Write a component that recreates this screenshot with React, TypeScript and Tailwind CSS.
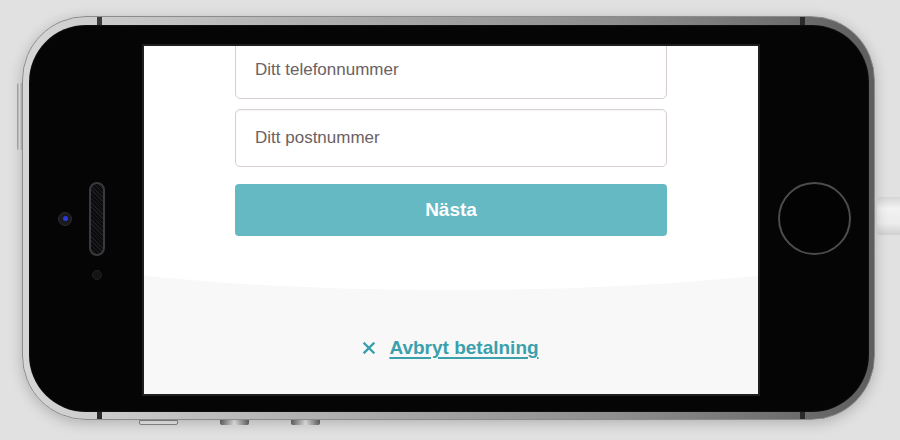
import React from 'react';

const font = {fontFamily: '"Liberation Sans", Arial, sans-serif'};

function CloseMark() {
    return (
        <svg width="12" height="12" viewBox="0 0 12 12" className="shrink-0">
            <path d="M1.5 1.5 L10.5 10.5 M10.5 1.5 L1.5 10.5" stroke="#3aa1ac" strokeWidth="2.4" strokeLinecap="square"/>
        </svg>
    );
}

function LeftBezel() {
    return (
        <div className="w-[113px] h-full flex items-center pl-[29px]">
            {/* front camera */}
            <div className="w-[14px] h-[14px] rounded-full bg-[#1b1b1f] border border-[#2c2c30] flex items-center justify-center">
                <div className="w-[5px] h-[5px] rounded-full bg-[#2a3bd8]"/>
            </div>
            {/* speaker + sensor */}
            <div className="ml-[17px] flex flex-col items-center">
                <div className="h-[24px]"/>
                <div className="w-[16px] h-[74px] rounded-full bg-[#121214] border-2 border-[#3a3a3e] bg-[repeating-linear-gradient(45deg,#1c1c1f_0px,#1c1c1f_1px,#0c0c0e_1px,#0c0c0e_3px)]"/>
                <div className="mt-[14px] w-[10px] h-[10px] rounded-full bg-[#141416] border border-[#222226]"/>
            </div>
        </div>
    );
}

function RightBezel() {
    return (
        <div className="flex-1 h-full flex items-center justify-center">
            <div className="w-[73px] h-[73px] rounded-full border-2 border-[#4c4c50] bg-[#030303]"/>
        </div>
    );
}

function Screen() {
    return (
        <div className="mt-[19px] w-[618px] h-[352px] border-2 border-[#1e1e1e] bg-[#1e1e1e]">
            <div className="w-[614px] h-[348px] overflow-hidden bg-[#f8f8f9] flex flex-col" style={font}>
                <div className="-mx-[120px] px-[120px] h-[244px] shrink-0 bg-white rounded-b-[50%_48px]">
                    <div className="w-[432px] mx-auto -mt-[5px] flex flex-col">
                        <input
                            placeholder="Ditt telefonnummer"
                            className="h-[58px] rounded-[5px] border border-[#d8d0d0] bg-white pl-[19px] text-[17px] text-[#6b6163] placeholder:text-[#6b6163] outline-none shadow-[inset_0_1px_2px_rgba(0,0,0,0.04)]"
                        />
                        <input
                            placeholder="Ditt postnummer"
                            className="mt-[10px] h-[58px] rounded-[5px] border border-[#d8d0d0] bg-white pl-[19px] text-[17px] text-[#6b6163] placeholder:text-[#6b6163] outline-none shadow-[inset_0_1px_2px_rgba(0,0,0,0.04)]"
                        />
                        <button className="mt-[17px] h-[52px] rounded-[4px] bg-[#65b9c3] text-white font-bold text-[19px]">
                            Nästa
                        </button>
                    </div>
                </div>
                <div className="flex items-center justify-center pt-[47px] gap-[14px]">
                    <CloseMark/>
                    <a className="text-[19px] leading-[22px] font-bold text-[#3aa1ac] underline decoration-2 underline-offset-[3px]">
                        Avbryt betalning
                    </a>
                </div>
            </div>
        </div>
    );
}

export default function App() {
    return (
        <div className="w-[900px] h-[440px] overflow-hidden bg-[#e1e1e1] flex items-start pt-[16px] pl-[17px]">
            {/* sleep button */}
            <div className="mt-[67px] w-[5px] h-[67px] rounded-l-[2px] bg-[linear-gradient(90deg,#9a9a9a,#e8e8e8,#b5b5b5)]"/>
            <div className="flex flex-col">
                <div className="relative w-[853px] h-[404px] rounded-[64px] pl-[6px] pt-[8px] pr-[5px] pb-[7px] border border-[#8c8c8c] bg-[linear-gradient(90deg,#d6d6d6,#b4b4b4_30%,#8e8e8e_70%,#5e5e5e)] shadow-[0_3px_14px_rgba(0,0,0,0.22)]">
                    <div className="absolute top-0 left-[74px] w-[5px] h-[8px] bg-[#3a3a3a]"/>
                    <div className="absolute bottom-0 left-[74px] w-[5px] h-[7px] bg-[#2a2a2a]"/>
                    <div className="absolute top-0 left-[777px] w-[5px] h-[8px] bg-[#2a2a2a]"/>
                    <div className="absolute bottom-0 left-[777px] w-[5px] h-[7px] bg-[#2a2a2a]"/>
                    <div className="w-full h-full rounded-[57px] bg-[#050505] flex items-start shadow-[inset_0_0_2px_rgba(255,255,255,0.15)]">
                        <LeftBezel/>
                        <Screen/>
                        <RightBezel/>
                    </div>
                </div>
                {/* volume / mute buttons */}
                <div className="flex pl-[117px]">
                    <div className="w-[39px] h-[5px] rounded-b-[2px] border border-[#8a8a8a] bg-[#ececec]"/>
                    <div className="ml-[42px] w-[29px] h-[5px] rounded-b-[2px] bg-[linear-gradient(90deg,#666,#eee,#666)]"/>
                    <div className="ml-[42px] w-[29px] h-[5px] rounded-b-[2px] bg-[linear-gradient(90deg,#666,#eee,#666)]"/>
                </div>
            </div>
            {/* cable */}
            <div className="ml-[2px] mt-[181px] w-[23px] h-[38px] rounded-l-[3px] bg-[linear-gradient(180deg,#d6d6d6,#f2f2f2_30%,#ececec_70%,#cfcfcf)]"/>
        </div>
    );
}
